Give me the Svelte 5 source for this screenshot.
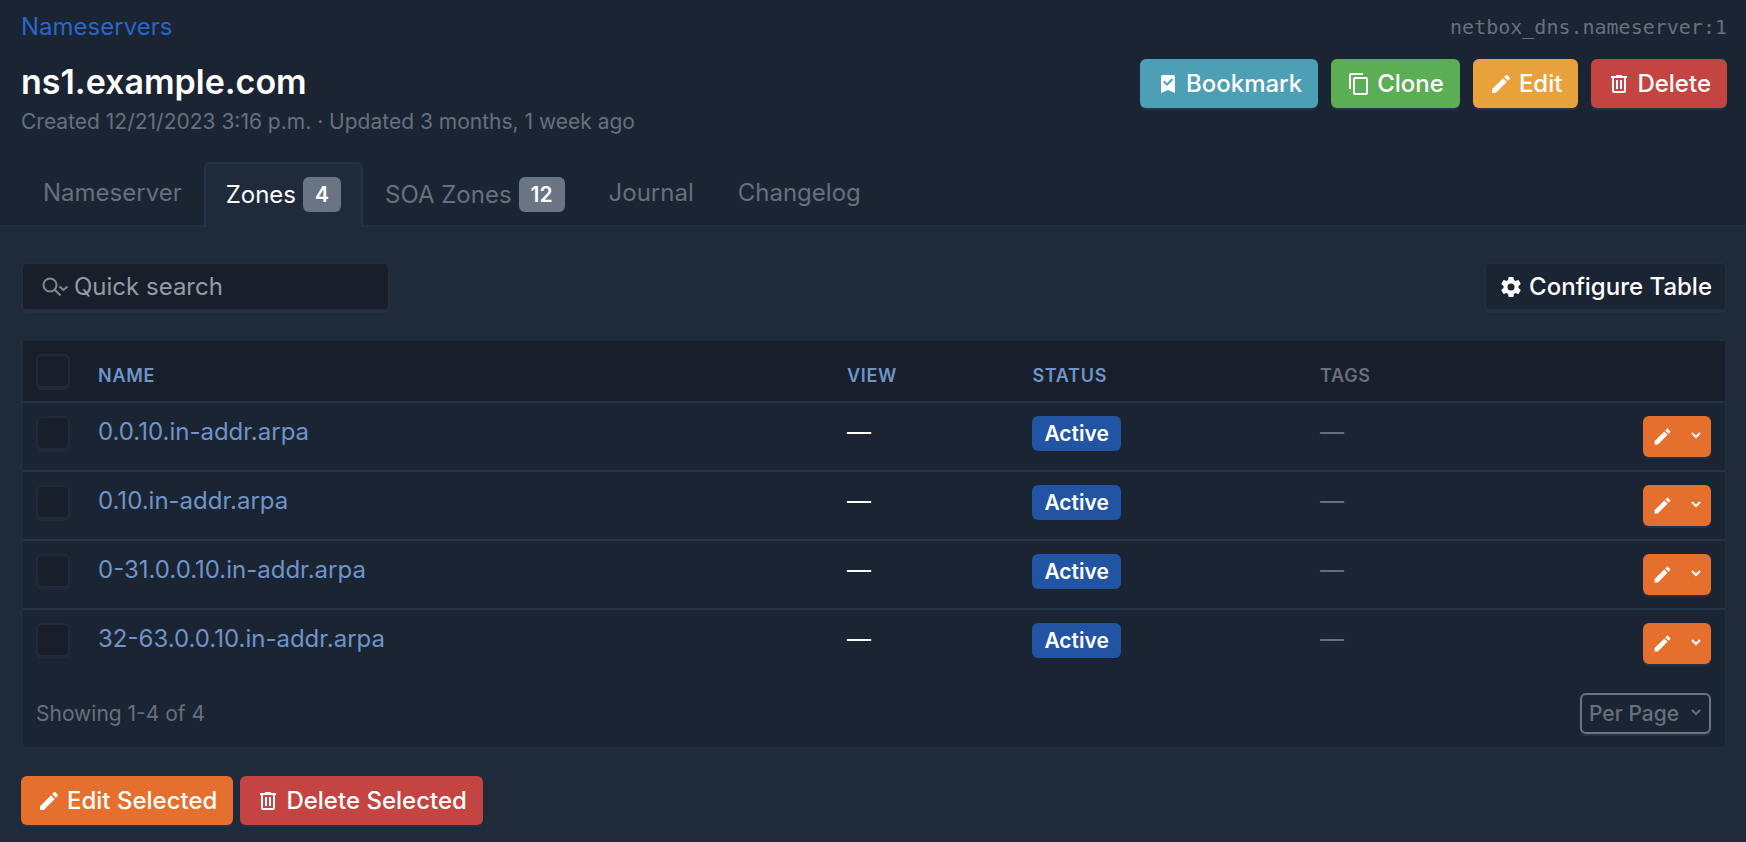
<script>
  const icons = {
    bookmark: 'M17,3A2,2 0 0,1 19,5V21L12,18L5,21V5C5,3.89 5.9,3 7,3H17M11,14L17.25,7.76L15.84,6.34L11,11.18L8.41,8.59L7,10L11,14Z',
    copy: 'M19,21H8V7H19M19,5H8A2,2 0 0,0 6,7V21A2,2 0 0,0 8,23H19A2,2 0 0,0 21,21V7A2,2 0 0,0 19,5M16,1H4A2,2 0 0,0 2,3V17H4V3H16V1Z',
    pencil: 'M20.71,7.04C21.1,6.65 21.1,6 20.71,5.63L18.37,3.29C18,2.9 17.35,2.9 16.96,3.29L15.12,5.12L18.87,8.87M3,17.25V21H6.75L17.81,9.93L14.06,6.18L3,17.25Z',
    trash: 'M9,3V4H4V6H5V19A2,2 0 0,0 7,21H17A2,2 0 0,0 19,19V6H20V4H15V3H9M7,6H17V19H7V6M9,8V17H11V8H9M13,8V17H15V8H13Z',
    cog: 'M12,15.5A3.5,3.5 0 0,1 8.5,12A3.5,3.5 0 0,1 12,8.5A3.5,3.5 0 0,1 15.5,12A3.5,3.5 0 0,1 12,15.5M19.43,12.97C19.47,12.65 19.5,12.33 19.5,12C19.5,11.67 19.47,11.34 19.43,11L21.54,9.37C21.73,9.22 21.78,8.95 21.66,8.73L19.66,5.27C19.54,5.05 19.27,4.96 19.05,5.05L16.56,6.05C16.04,5.66 15.5,5.32 14.87,5.07L14.5,2.42C14.46,2.18 14.25,2 14,2H10C9.75,2 9.54,2.18 9.5,2.42L9.13,5.07C8.5,5.32 7.96,5.66 7.44,6.05L4.95,5.05C4.73,4.96 4.46,5.05 4.34,5.27L2.34,8.73C2.21,8.95 2.27,9.22 2.46,9.37L4.57,11C4.53,11.34 4.5,11.67 4.5,12C4.5,12.33 4.53,12.65 4.57,12.97L2.46,14.63C2.27,14.78 2.21,15.05 2.34,15.27L4.34,18.73C4.46,18.95 4.73,19.03 4.95,18.95L7.44,17.94C7.96,18.34 8.5,18.68 9.13,18.93L9.5,21.58C9.54,21.82 9.75,22 10,22H14C14.25,22 14.46,21.82 14.5,21.58L14.87,18.93C15.5,18.67 16.04,18.34 16.56,17.94L19.05,18.95C19.27,19.03 19.54,18.95 19.66,18.73L21.66,15.27C21.78,15.05 21.73,14.78 21.54,14.63L19.43,12.97Z'
  };

  const actions = [
    { label: 'Bookmark', icon: 'bookmark', tone: 'teal' },
    { label: 'Clone', icon: 'copy', tone: 'green' },
    { label: 'Edit', icon: 'pencil', tone: 'yellow' },
    { label: 'Delete', icon: 'trash', tone: 'red' }
  ];

  const tabs = [
    { label: 'Nameserver' },
    { label: 'Zones', count: 4, active: true },
    { label: 'SOA Zones', count: 12 },
    { label: 'Journal' },
    { label: 'Changelog' }
  ];

  const zones = [
    { name: '0.0.10.in-addr.arpa', status: 'Active' },
    { name: '0.10.in-addr.arpa', status: 'Active' },
    { name: '0-31.0.0.10.in-addr.arpa', status: 'Active' },
    { name: '32-63.0.0.10.in-addr.arpa', status: 'Active' }
  ];

  let selected = $state(zones.map(() => false));
  let allSelected = $derived(selected.every(Boolean));

  function toggleAll() {
    const next = !allSelected;
    selected = zones.map(() => next);
  }
</script>

{#snippet icon(name)}
  <svg class="icon" viewBox="0 0 24 24" aria-hidden="true"><path d={icons[name]} /></svg>
{/snippet}

{#snippet caret()}
  <svg class="caret" viewBox="0 0 12 12" aria-hidden="true"><path d="M2 2l4 4 4-4" /></svg>
{/snippet}

<header class="page-header">
  <div class="row top">
    <nav aria-label="Breadcrumb"><a class="crumb" href="#nameservers">Nameservers</a></nav>
    <code>netbox_dns.nameserver:1</code>
  </div>
  <div class="row heading">
    <div>
      <h1>ns1.example.com</h1>
      <p class="meta">Created 12/21/2023 3:16 p.m. · Updated 3 months, 1 week ago</p>
    </div>
    <div class="actions">
      {#each actions as a}
        <button type="button" class="btn {a.tone}">{@render icon(a.icon)}{a.label}</button>
      {/each}
    </div>
  </div>
  <nav class="tabs" aria-label="Object views">
    {#each tabs as t}
      <a href="#{t.label.toLowerCase().replace(' ', '-')}" class="tab" class:active={t.active} aria-current={t.active ? 'page' : undefined}>
        {t.label}{#if t.count}<span class="badge count">{t.count}</span>{/if}
      </a>
    {/each}
  </nav>
</header>

<main>
  <div class="row toolbar">
    <label class="search">
      <svg viewBox="0 0 28 20" aria-hidden="true">
        <circle cx="8" cy="8" r="6.5" /><path d="M12.5 12.5l6 6M17.500 9.500l4 3.500 4-3.500" />
      </svg>
      <input type="search" placeholder="Quick search" aria-label="Quick search" />
    </label>
    <button type="button" class="btn configure">{@render icon('cog')}Configure Table</button>
  </div>

  <section class="card">
    <table>
      <colgroup>
        <col class="c-check" /><col class="c-name" /><col class="c-view" /><col class="c-status" /><col />
        <col class="c-act" />
      </colgroup>
      <thead>
        <tr>
          <th><input type="checkbox" aria-label="Select all" checked={allSelected} onchange={toggleAll} /></th>
          <th><a href="#sort-name">Name</a></th>
          <th><a href="#sort-view">View</a></th>
          <th><a href="#sort-status">Status</a></th>
          <th>Tags</th>
          <th></th>
        </tr>
      </thead>
      <tbody>
        {#each zones as z, i}
          <tr>
            <td><input type="checkbox" aria-label="Select {z.name}" bind:checked={selected[i]} /></td>
            <td><a href="#zone-{i}">{z.name}</a></td>
            <td>—</td>
            <td><span class="badge status">{z.status}</span></td>
            <td class="muted">—</td>
            <td>
              <div class="split">
                <button type="button" aria-label="Edit {z.name}">{@render icon('pencil')}</button>
                <button type="button" aria-label="More actions for {z.name}" aria-haspopup="menu">{@render caret()}</button>
              </div>
            </td>
          </tr>
        {/each}
      </tbody>
    </table>
    <div class="row footer">
      <span>Showing 1-4 of 4</span>
      <div class="per-page">
        <select aria-label="Per Page"><option>Per Page</option></select>
        {@render caret()}
      </div>
    </div>
  </section>

  <div class="bulk">
    <button type="button" class="btn orange">{@render icon('pencil')}Edit Selected</button>
    <button type="button" class="btn red">{@render icon('trash')}Delete Selected</button>
  </div>
</main>

<style>
  :global(body) {
    background: #1f2a3a;
    color: #fff;
    font: 400 24px/32px Inter, 'Liberation Sans', sans-serif;
  }
  a { color: #6f94c8; text-decoration: none; }
  button, input, select { font: inherit; color: inherit; margin: 0; }
  button { cursor: pointer; }
  .row { display: flex; justify-content: space-between; }
  .page-header {
    padding: 11px 19px 0 21px;
    background: #1b2433;
    border-bottom: 2px solid #212c3d;
  }
  .top { align-items: center; }
  .crumb { color: #2a66c9; }
  code { font: 20px/32px 'DejaVu Sans Mono', monospace; color: #66707f; }
  .heading { align-items: flex-start; padding-top: 16px; }
  h1 { margin: 5px 0 0; font-size: 34px; line-height: 36px; font-weight: 600; }
  .meta { margin: 8px 0 0; font-size: 21px; line-height: 28px; color: #66707f; }
  .actions { display: flex; gap: 13px; }
  .icon { width: 24px; height: 24px; fill: currentColor; flex: none; }
  .caret { width: 12px; height: 12px; fill: none; stroke: currentColor; stroke-width: 2; flex: none; }
  .btn {
    display: inline-flex;
    align-items: center;
    gap: 6px;
    height: 49px;
    padding: 0 16px;
    border: 0;
    border-radius: 6px;
    font-weight: 500;
    box-shadow: 0 2px 1px #263347;
    white-space: nowrap;
  }
  .teal { background: #4d9fb6; }
  .green { background: #5cae54; }
  .yellow { background: #e9a23b; }
  .red { background: #c34440; }
  .orange { background: #e5702e; }

  .tabs { display: flex; align-items: flex-start; margin-top: 26px; }
  .tab {
    display: flex;
    align-items: center;
    padding: 13px 20px;
    border: 2px solid transparent;
    border-bottom: 0;
    border-radius: 6px 6px 0 0;
    color: #66707f;
    white-space: nowrap;
  }
  .tab.active { color: #fff; background: #1f2a3a; border-color: #253145; margin-bottom: -2px; padding-bottom: 15px; }
  .badge {
    display: inline-flex;
    align-items: center;
    height: 35px;
    padding: 0 12px;
    border-radius: 6px;
    font-size: 21px;
    line-height: 20px;
  }
  .count { margin-left: 7px; background: #6a7583; color: #fff; font-weight: 600; }
  .status { background: #2154a2; font-weight: 600; }

  main { padding: 35px 19px 14px 21px; }
  .search {
    display: flex;
    align-items: center;
    gap: 4px;
    box-sizing: border-box;
    width: 369px;
    height: 49px;
    padding: 0 19px;
    background: #191f2a;
    border: 2px solid #222d3f;
    border-radius: 6px;
    box-shadow: 0 2px 0 #243043;
  }
  .search svg { width: 28px; height: 20px; flex: none; fill: none; stroke: #85898c; stroke-width: 2; }
  .search input { flex: 1; min-width: 0; padding: 0; border: 0; outline: 0; background: none; }
  .search input::placeholder { color: #939ca8; opacity: 1; }
  .configure {
    padding: 0 13px;
    background: #1b2433;
    border: 2px solid #222d3f;
    box-shadow: 0 2px 0 #243043;
  }

  .card {
    margin-top: 28px;
    background: #1b2433;
    border: 2px solid #212c3e;
    border-radius: 6px;
  }
  table { width: 100%; border-collapse: separate; border-spacing: 0; table-layout: fixed; }
  .c-check { width: 62px; }
  .c-name { width: 44%; }
  .c-view { width: 10.9%; }
  .c-status { width: 16.9%; }
  .c-act { width: 96px; }
  th, td { padding: 13px; text-align: left; }
  th {
    height: 34px;
    background: #191f2a;
    border-bottom: 2px solid #263447;
    color: #66707f;
    font-size: 18px;
    line-height: 24px;
    font-weight: 600;
    letter-spacing: 0.04em;
    text-transform: uppercase;
    vertical-align: bottom;
  }
  td { height: 41px; vertical-align: top; border-bottom: 2px solid #263447; }
  tbody tr:last-child td { border-bottom-color: transparent; }
  th:last-child, td:last-child { padding-right: 14px; }
  .muted { color: #66707f; }
  input[type='checkbox'] {
    display: block;
    appearance: none;
    box-sizing: border-box;
    width: 34px;
    height: 34px;
    background: #191f2a;
    border: 2px solid #1f2a3a;
    border-radius: 6px;
    box-shadow: 0 2px 0 #1f2a3a;
  }
  input[type='checkbox']:checked { background: #2154a2; }
  td .badge { vertical-align: top; }
  .split { display: flex; width: 68px; height: 41px; margin-left: auto; border-radius: 6px; background: #e5702e; box-shadow: 0 2px 1px #263347; }
  .split button { display: flex; align-items: center; justify-content: center; padding: 0; border: 0; background: none; }
  .split button:first-child { width: 38px; }
  .split button:last-child { flex: 1; }
  .split .icon { width: 21px; height: 21px; }

  .footer { align-items: center; padding: 14px 14px 13px 13px; font-size: 21px; color: #66707f; }
  .per-page {
    display: flex;
    align-items: center;
    box-sizing: border-box;
    height: 41px;
    border: 2px solid #6a7583;
    border-radius: 6px;
    position: relative;
    box-shadow: 0 2px 1px #263347;
  }
  .per-page select { appearance: none; height: 100%; padding: 0 29px 0 7px; border: 0; background: none; font-weight: 500; }
  .per-page .caret { position: absolute; right: 7px; pointer-events: none; }
  .bulk { display: flex; gap: 7px; margin-top: 27px; }
</style>
